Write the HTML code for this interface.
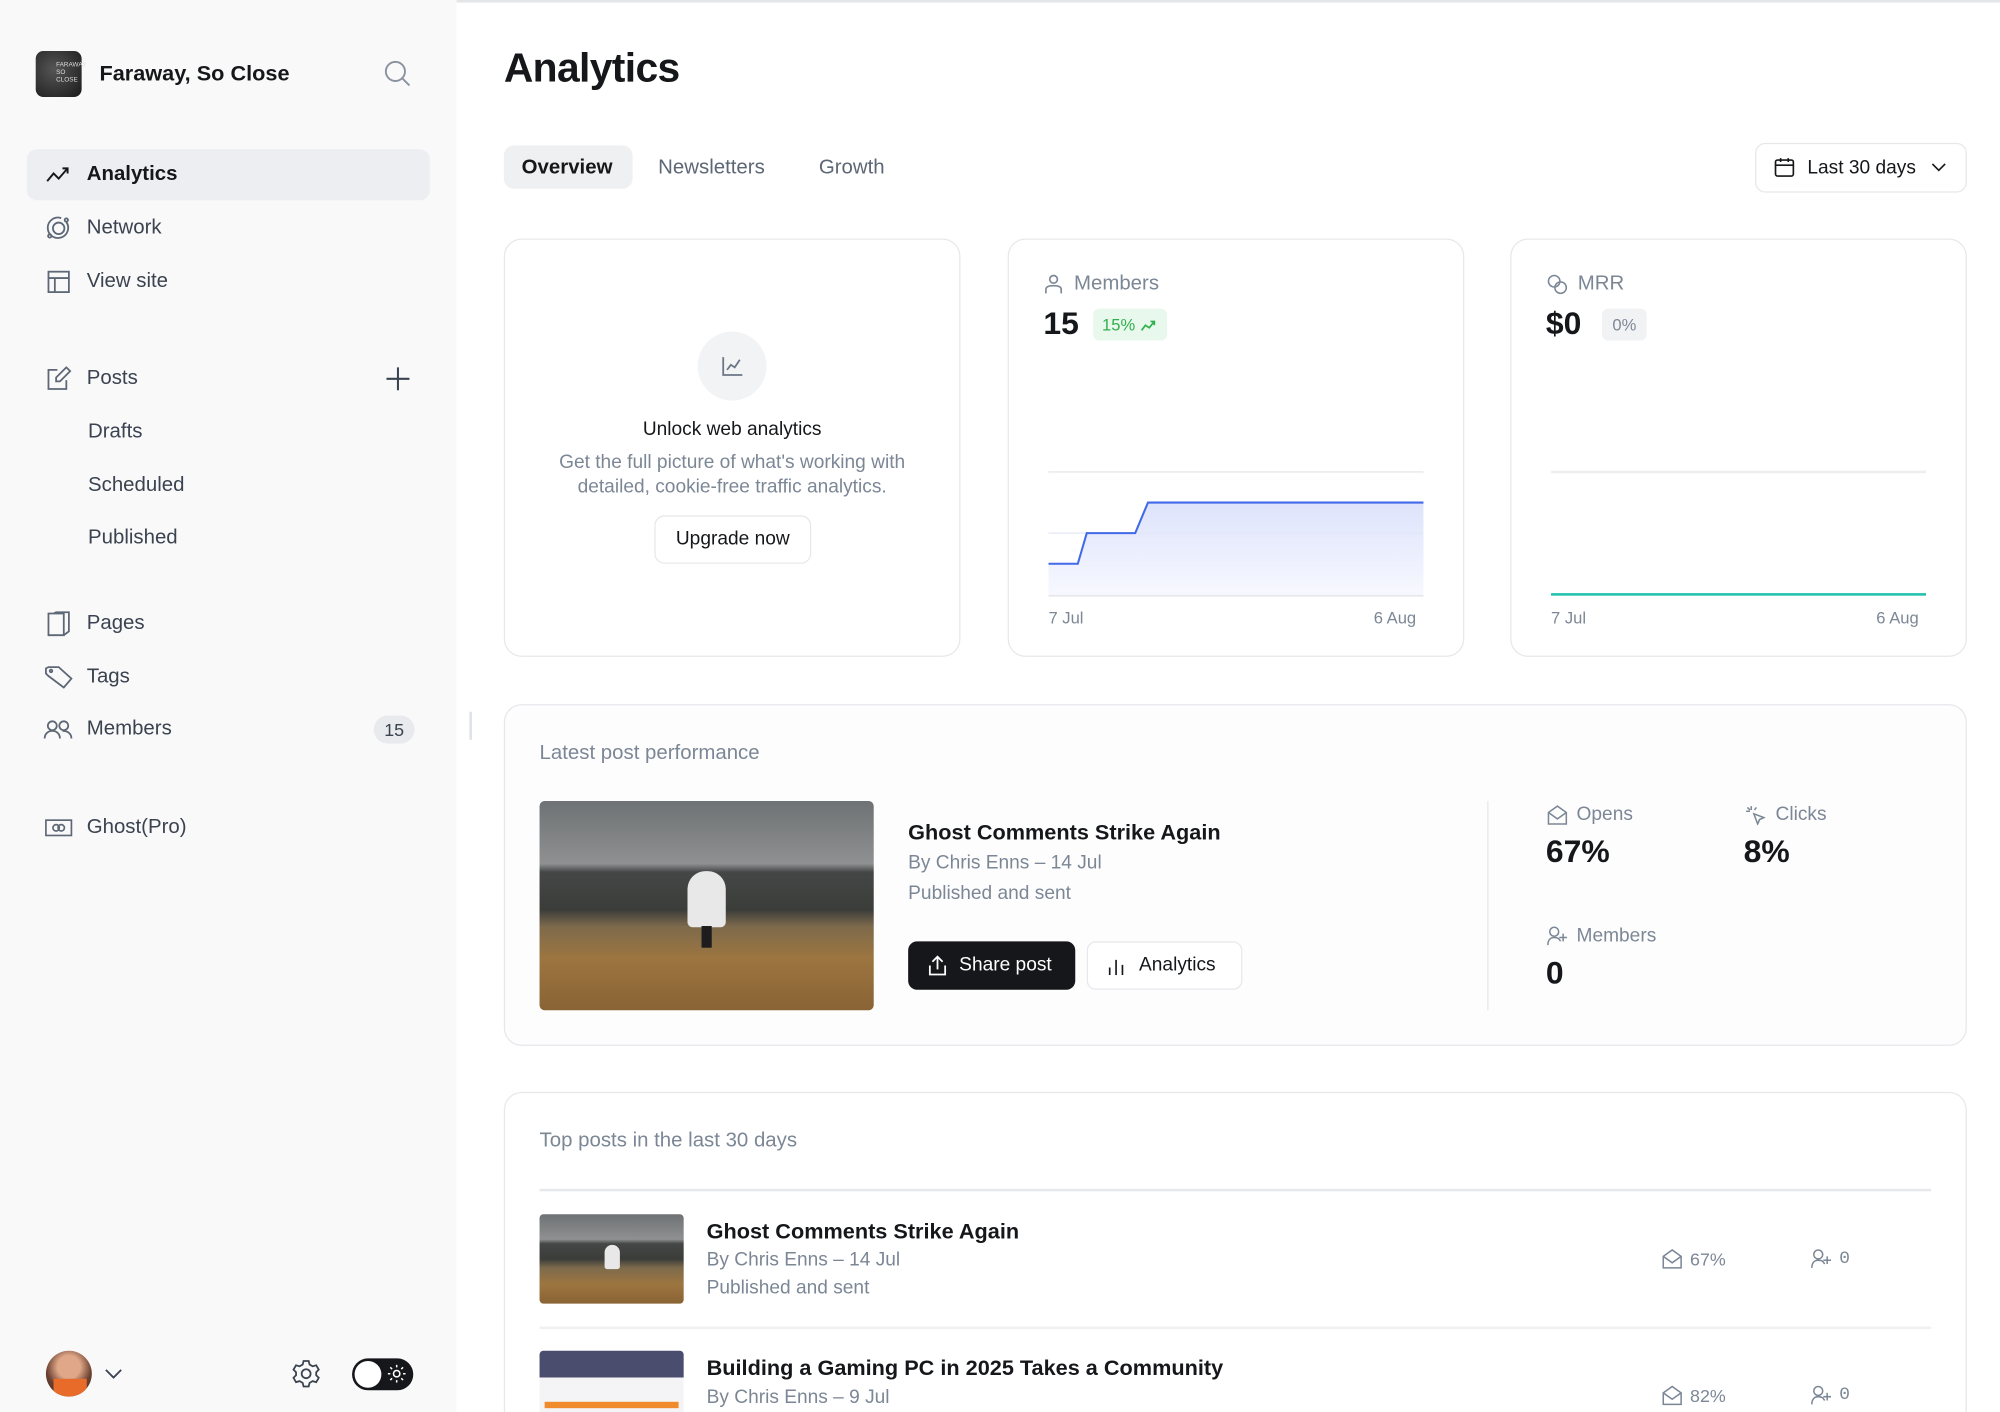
<!DOCTYPE html>
<html><head><meta charset="utf-8"><style>
*{box-sizing:border-box;margin:0;padding:0}
html,body{width:2000px;height:1412px;overflow:hidden;background:#fff}
#w{position:absolute;left:0;top:0;width:1568px;height:1107px;transform:scale(1.27551);transform-origin:0 0;font-family:"Liberation Sans",sans-serif;color:#15171a;overflow:hidden;background:#fff}
.a{position:absolute;white-space:nowrap}
.sb{position:absolute;left:0;top:0;width:358px;height:1107px;background:#f9f9fa}
.nav{position:absolute;left:68px;font-size:16px;color:#3b4350;transform:translateY(-50%)}
.ic{position:absolute;transform:translate(-50%,-50%)}
.card{position:absolute;border:1.5px solid #e6e8eb;border-radius:14px;background:#fff}
.g{color:#7c8796}
svg{display:block}
</style></head><body><div id="w">
<div class="a" style="left:0;top:0;width:1568px;height:2px;background:#e3e5e8"></div>
<div class="sb"></div>
<!-- logo -->
<div class="a" style="left:28px;top:40px;width:36px;height:36px;border-radius:6px;background:radial-gradient(circle at 40% 40%,#555,#1a1a1a)"></div>
<div class="a" style="left:44px;top:48px;font-size:5px;color:#ddd;line-height:6px">FARAWAY<br>SO<br>CLOSE</div>
<div class="a" style="left:78px;top:48px;font-size:17px;font-weight:bold;color:#15171a">Faraway, So Close</div>
<svg class="ic" style="left:312px;top:58px" width="22" height="22" viewBox="0 0 22 22" fill="none" stroke="#8a939f" stroke-width="1.5"><circle cx="9" cy="9" r="7.5"/><path d="M14.5 14.5 20 20"/></svg>
<div class="a" style="left:21px;top:117px;width:316px;height:40px;background:#eceef1;border-radius:8px"></div>
<svg class="ic" style="left:46px;top:137px" width="20" height="14" viewBox="0 0 20 14" fill="none" stroke="#15171a" stroke-width="1.5"><path d="M1 12 6 6l4 4 7-8M13 2h4v4"/></svg>
<div class="nav" style="top:137px;color:#15171a;font-weight:bold">Analytics</div>
<svg class="ic" style="left:46px;top:179px" width="20" height="20" viewBox="0 0 20 20" fill="none" stroke="#5d6775" stroke-width="1.4"><circle cx="10" cy="10" r="4.5"/><path d="M16 5a8 8 0 1 1-4-3"/><circle cx="16" cy="3.5" r="1.3"/><circle cx="3" cy="16" r="1.3"/></svg>
<div class="nav" style="top:179px">Network</div>
<svg class="ic" style="left:46px;top:221px" width="18" height="18" viewBox="0 0 18 18" fill="none" stroke="#5d6775" stroke-width="1.4"><rect x="1" y="1" width="16" height="16"/><path d="M1 6h16M6 6v11"/></svg>
<div class="nav" style="top:221px">View site</div>
<svg class="ic" style="left:46px;top:297px" width="20" height="20" viewBox="0 0 20 20" fill="none" stroke="#5d6775" stroke-width="1.4"><path d="M9 3H2v15h14v-7"/><path d="M16 1l3 3-8 8H8V9z"/></svg>
<div class="nav" style="top:297px">Posts</div>
<svg class="ic" style="left:312px;top:297px" width="20" height="20" viewBox="0 0 20 20" stroke="#3b4350" stroke-width="1.6"><path d="M10 1v18M1 10h18"/></svg>
<div class="nav" style="left:69px;top:339px">Drafts</div>
<div class="nav" style="left:69px;top:381px">Scheduled</div>
<div class="nav" style="left:69px;top:422px">Published</div>
<svg class="ic" style="left:46px;top:489px" width="18" height="20" viewBox="0 0 18 20" fill="none" stroke="#5d6775" stroke-width="1.4"><path d="M1 2h12v17H1zM5 2l2-1h10v15l-4 3"/></svg>
<div class="nav" style="top:489px">Pages</div>
<svg class="ic" style="left:46px;top:531px" width="22" height="18" viewBox="0 0 22 18" fill="none" stroke="#5d6775" stroke-width="1.4"><path d="M1 2 3 1h8l10 9-6 7L3 8 1 6z"/><circle cx="5" cy="4" r="1"/></svg>
<div class="nav" style="top:531px">Tags</div>
<svg class="ic" style="left:46px;top:572px" width="24" height="16" viewBox="0 0 24 16" fill="none" stroke="#5d6775" stroke-width="1.4"><circle cx="7" cy="5" r="3.5"/><path d="M1 15c0-4 3-6 6-6s6 2 6 6"/><circle cx="16" cy="5" r="3.5"/><path d="M15 9c4 0 7 2 7 6"/></svg>
<div class="nav" style="top:572px">Members</div>
<div class="a" style="left:293px;top:561px;width:32px;height:22px;border-radius:11px;background:#e8eaed;font-size:14px;color:#3b4350;text-align:center;line-height:22px">15</div>
<svg class="ic" style="left:46px;top:649px" width="22" height="14" viewBox="0 0 22 14" fill="none" stroke="#5d6775" stroke-width="1.3"><rect x="1" y="1" width="20" height="12"/><circle cx="9" cy="7" r="2.5"/><circle cx="13" cy="7" r="2.5"/></svg>
<div class="nav" style="top:649px">Ghost(Pro)</div>
<div class="a" style="left:368px;top:558px;width:2px;height:22px;background:#dfe2e6"></div>
<!-- bottom -->
<div class="a" style="left:36px;top:1059px;width:36px;height:36px;border-radius:50%;background:radial-gradient(circle at 50% 35%,#e0a889 0 30%,#6b4030 60%,#3a2a22);overflow:hidden"><div style="position:absolute;left:6px;top:22px;width:26px;height:14px;background:#e86b2a"></div></div>
<svg class="ic" style="left:89px;top:1077px" width="14" height="8" viewBox="0 0 14 8" fill="none" stroke="#3b4350" stroke-width="1.4"><path d="M1 1l6 6 6-6"/></svg>
<svg class="ic" style="left:240px;top:1077px" width="24" height="24" viewBox="0 0 24 24" fill="none" stroke="#3b4350" stroke-width="1.4"><circle cx="12" cy="12" r="3.5"/><path d="M10 2h4l.7 2.8 2.4 1.4 2.8-.8 2 3.4-2 2v2.4l2 2-2 3.4-2.8-.8-2.4 1.4L14 22h-4l-.7-2.8-2.4-1.4-2.8.8-2-3.4 2-2v-2.4l-2-2 2-3.4 2.8.8 2.4-1.4z"/></svg>
<div class="a" style="left:276px;top:1065px;width:48px;height:25px;border-radius:13px;background:#15171a"></div>
<div class="a" style="left:278px;top:1067px;width:21px;height:21px;border-radius:50%;background:#fff"></div>
<svg class="ic" style="left:311px;top:1077px" width="14" height="14" viewBox="0 0 14 14" fill="none" stroke="#fff" stroke-width="1.2"><circle cx="7" cy="7" r="2.5"/><path d="M7 0v2M7 12v2M0 7h2M12 7h2M2 2l1.4 1.4M10.6 10.6 12 12M2 12l1.4-1.4M10.6 3.4 12 2"/></svg>

<!-- main -->
<div class="a" style="left:395px;top:35px;font-size:32px;font-weight:bold;letter-spacing:-0.5px">Analytics</div>
<div class="a" style="left:395px;top:114px;width:101px;height:34px;border-radius:8px;background:#eff0f2"></div>
<div class="a" style="left:409px;top:123px;font-size:16px;font-weight:bold">Overview</div>
<div class="a g" style="left:516px;top:123px;font-size:16px;color:#5d6775">Newsletters</div>
<div class="a g" style="left:642px;top:123px;font-size:16px;color:#5d6775">Growth</div>
<div class="a" style="left:1376px;top:112px;width:166px;height:39px;border:1.5px solid #e6e8eb;border-radius:8px"></div>
<svg class="ic" style="left:1399px;top:131px" width="16" height="16" viewBox="0 0 16 16" fill="none" stroke="#15171a" stroke-width="1.3"><rect x="1" y="2.5" width="14" height="12.5" rx="1.5"/><path d="M1 6.5h14M5 1v3M11 1v3"/></svg>
<div class="a" style="left:1417px;top:123px;font-size:15px">Last 30 days</div>
<svg class="ic" style="left:1520px;top:131px" width="12" height="7" viewBox="0 0 12 7" fill="none" stroke="#15171a" stroke-width="1.3"><path d="M1 1l5 5 5-5"/></svg>

<!-- card 1 -->
<div class="card" style="left:395px;top:187px;width:358px;height:328px"></div>
<div class="a" style="left:547px;top:260px;width:54px;height:54px;border-radius:50%;background:#f2f3f5"></div>
<svg class="ic" style="left:574px;top:287px" width="18" height="16" viewBox="0 0 18 16" fill="none" stroke="#6b7684" stroke-width="1.4"><path d="M2 1v14h15M5 11l3-4 3 2 4-6"/></svg>
<div class="a" style="left:395px;width:358px;text-align:center;top:328px;font-size:15px">Unlock web analytics</div>
<div class="a g" style="left:395px;width:358px;text-align:center;top:353px;font-size:15px;line-height:19px;white-space:normal;padding:0 26px">Get the full picture of what's working with detailed, cookie-free traffic analytics.</div>
<div class="a" style="left:513px;top:404px;width:123px;height:38px;border:1.5px solid #e6e8eb;border-radius:8px;font-size:15px;text-align:center;line-height:35px">Upgrade now</div>

<!-- card 2 -->
<div class="card" style="left:790px;top:187px;width:358px;height:328px"></div>
<svg class="ic" style="left:826px;top:223px" width="14" height="16" viewBox="0 0 14 16" fill="none" stroke="#7c8796" stroke-width="1.3"><circle cx="7" cy="4" r="3"/><path d="M1 15v-3c0-2 2-3 6-3s6 1 6 3v3"/></svg>
<div class="a g" style="left:842px;top:214px;font-size:16px">Members</div>
<div class="a" style="left:818px;top:240px;font-size:25px;font-weight:bold">15</div>
<div class="a" style="left:857px;top:242px;width:58px;height:25px;border-radius:5px;background:#e8f8ec;color:#30b04b;font-size:13px;line-height:25px;padding-left:7px">15% <svg style="display:inline;vertical-align:-1px" width="12" height="9" viewBox="0 0 12 9" fill="none" stroke="#30b04b" stroke-width="1.3"><path d="M1 8l3-4 3 2 4-5M8 1h3v3"/></svg></div>
<svg class="a" style="left:822px;top:368px" width="294" height="102" viewBox="0 0 294 102">
<defs><linearGradient id="f" x1="0" y1="0" x2="0" y2="1"><stop offset="0" stop-color="#dde3fb"/><stop offset="1" stop-color="#f7f8ff"/></linearGradient></defs>
<path d="M0 2h294" stroke="#eceef0" stroke-width="1.5"/>
<path d="M0 74h23l7-24h38l10-24h216v72H0z" fill="url(#f)"/>
<path d="M0 50h294" stroke="#e3e6f6" stroke-width="1"/>
<path d="M0 74h23l7-24h38l10-24h216" fill="none" stroke="#4169e8" stroke-width="1.6"/>
<path d="M0 99h294" stroke="#e6e8eb" stroke-width="1.5"/></svg>
<div class="a g" style="left:822px;top:477px;font-size:13px">7 Jul</div>
<div class="a g" style="left:1077px;top:477px;font-size:13px">6 Aug</div>

<!-- card 3 -->
<div class="card" style="left:1184px;top:187px;width:358px;height:328px"></div>
<svg class="ic" style="left:1221px;top:223px" width="16" height="16" viewBox="0 0 16 16" fill="none" stroke="#7c8796" stroke-width="1.2"><circle cx="5.5" cy="5.5" r="4.5"/><circle cx="10.5" cy="10.5" r="4.5"/></svg>
<div class="a g" style="left:1237px;top:214px;font-size:16px">MRR</div>
<div class="a" style="left:1212px;top:240px;font-size:25px;font-weight:bold">$0</div>
<div class="a" style="left:1256px;top:242px;width:35px;height:25px;border-radius:5px;background:#f1f2f4;color:#7c8796;font-size:13px;line-height:25px;text-align:center">0%</div>
<div class="a" style="left:1216px;top:369px;width:294px;height:1.5px;background:#eceef0"></div>
<div class="a" style="left:1216px;top:465px;width:294px;height:2px;background:#1fc2ad"></div>
<div class="a g" style="left:1216px;top:477px;font-size:13px">7 Jul</div>
<div class="a g" style="left:1471px;top:477px;font-size:13px">6 Aug</div>

<!-- latest post -->
<div class="card" style="left:395px;top:552px;width:1147px;height:268px;background:#fdfdfd"></div>
<div class="a g" style="left:423px;top:582px;font-size:16px">Latest post performance</div>
<div class="a" style="left:423px;top:628px;width:262px;height:164px;border-radius:4px;overflow:hidden;background:linear-gradient(180deg,#6f7274 0%,#8e9091 30%,#444746 34%,#3b3d3a 52%,#7d6a4c 60%,#9c7540 75%,#8a6335 100%)">
<div style="position:absolute;left:116px;top:55px;width:30px;height:44px;background:#e8e8e8;border-radius:14px 14px 4px 4px"></div>
<div style="position:absolute;left:127px;top:98px;width:8px;height:17px;background:#1d1d1d"></div></div>
<div class="a" style="left:712px;top:643px;font-size:17px;font-weight:bold">Ghost Comments Strike Again</div>
<div class="a g" style="left:712px;top:668px;font-size:15px">By Chris Enns – 14 Jul</div>
<div class="a g" style="left:712px;top:692px;font-size:15px">Published and sent</div>
<div class="a" style="left:712px;top:738px;width:131px;height:38px;border-radius:7px;background:#15171a;color:#fff;font-size:15px;line-height:38px;padding-left:40px">Share post</div>
<svg class="ic" style="left:735px;top:757px" width="14" height="16" viewBox="0 0 14 16" fill="none" stroke="#fff" stroke-width="1.4"><path d="M7 11V1M3 5l4-4 4 4M1 8v7h12V8"/></svg>
<div class="a" style="left:852px;top:738px;width:122px;height:38px;border-radius:7px;border:1.5px solid #e6e8eb;background:#fff;font-size:15px;line-height:35px;padding-left:40px">Analytics</div>
<svg class="ic" style="left:875px;top:758px" width="12" height="13" viewBox="0 0 12 13" stroke="#15171a" stroke-width="1.3"><path d="M1 13V7M6 13V1M11 13V5"/></svg>
<div class="a" style="left:1166px;top:628px;width:1px;height:164px;background:#e6e8eb"></div>
<svg class="ic" style="left:1221px;top:639px" width="16" height="16" viewBox="0 0 16 16" fill="none" stroke="#7c8796" stroke-width="1.2"><path d="M1 6l7-5 7 5v9H1zM1 6l7 5 7-5"/></svg>
<div class="a g" style="left:1236px;top:630px;font-size:15px">Opens</div>
<div class="a" style="left:1212px;top:654px;font-size:25px;font-weight:bold">67%</div>
<svg class="ic" style="left:1376px;top:639px" width="16" height="16" viewBox="0 0 16 16" fill="none" stroke="#7c8796" stroke-width="1.2"><path d="M7 7l3 8 1.5-3.5L15 10zM5 1v3M1 5h3M2 2l2 2M9 2l-1.5 2"/></svg>
<div class="a g" style="left:1392px;top:630px;font-size:15px">Clicks</div>
<div class="a" style="left:1367px;top:654px;font-size:25px;font-weight:bold">8%</div>
<svg class="ic" style="left:1221px;top:734px" width="17" height="16" viewBox="0 0 17 16" fill="none" stroke="#7c8796" stroke-width="1.2"><circle cx="6" cy="4.5" r="3.5"/><path d="M1 15c0-4 2-6 5-6s4 1 5 3M13 6v6M10 9h6"/></svg>
<div class="a g" style="left:1236px;top:725px;font-size:15px">Members</div>
<div class="a" style="left:1212px;top:749px;font-size:25px;font-weight:bold">0</div>

<!-- top posts -->
<div class="card" style="left:395px;top:856px;width:1147px;height:300px"></div>
<div class="a g" style="left:423px;top:886px;font-size:16px">Top posts in the last 30 days</div>
<div class="a" style="left:423px;top:932px;width:1091px;height:1.5px;background:#e6e8eb"></div>
<div class="a" style="left:423px;top:952px;width:113px;height:70px;border-radius:3px;overflow:hidden;background:linear-gradient(180deg,#6f7274 0%,#8e9091 28%,#444746 33%,#3b3d3a 50%,#7d6a4c 60%,#9c7540 78%,#8a6335 100%)"><div style="position:absolute;left:51px;top:24px;width:12px;height:19px;background:#e8e8e8;border-radius:6px 6px 2px 2px"></div></div>
<div class="a" style="left:554px;top:956px;font-size:17px;font-weight:bold">Ghost Comments Strike Again</div>
<div class="a g" style="left:554px;top:979px;font-size:15px">By Chris Enns – 14 Jul</div>
<div class="a g" style="left:554px;top:1001px;font-size:15px">Published and sent</div>
<svg class="ic" style="left:1311px;top:987px" width="16" height="16" viewBox="0 0 16 16" fill="none" stroke="#7c8796" stroke-width="1.2"><path d="M1 6l7-5 7 5v9H1zM1 6l7 5 7-5"/></svg>
<div class="a g" style="left:1325px;top:979px;font-size:14px">67%</div>
<svg class="ic" style="left:1428px;top:987px" width="17" height="16" viewBox="0 0 17 16" fill="none" stroke="#7c8796" stroke-width="1.2"><circle cx="6" cy="4.5" r="3.5"/><path d="M1 15c0-4 2-6 5-6s4 1 5 3M13 6v6M10 9h6"/></svg>
<div class="a g" style="left:1442px;top:979px;font-size:14px;font-family:'Liberation Mono',monospace">0</div>
<div class="a" style="left:423px;top:1040px;width:1091px;height:1.5px;background:#eef0f2"></div>
<div class="a" style="left:423px;top:1059px;width:113px;height:70px;border-radius:3px;overflow:hidden;background:linear-gradient(180deg,#4a4d6e 0 30%,#f4f4f6 30%)"><div style="position:absolute;left:4px;top:40px;width:105px;height:5px;background:#f08a2a"></div></div>
<div class="a" style="left:554px;top:1063px;font-size:17px;font-weight:bold">Building a Gaming PC in 2025 Takes a Community</div>
<div class="a g" style="left:554px;top:1087px;font-size:15px">By Chris Enns – 9 Jul</div>
<svg class="ic" style="left:1311px;top:1094px" width="16" height="16" viewBox="0 0 16 16" fill="none" stroke="#7c8796" stroke-width="1.2"><path d="M1 6l7-5 7 5v9H1zM1 6l7 5 7-5"/></svg>
<div class="a g" style="left:1325px;top:1086px;font-size:14px">82%</div>
<svg class="ic" style="left:1428px;top:1094px" width="17" height="16" viewBox="0 0 17 16" fill="none" stroke="#7c8796" stroke-width="1.2"><circle cx="6" cy="4.5" r="3.5"/><path d="M1 15c0-4 2-6 5-6s4 1 5 3M13 6v6M10 9h6"/></svg>
<div class="a g" style="left:1442px;top:1086px;font-size:14px;font-family:'Liberation Mono',monospace">0</div>
</div></body></html>
